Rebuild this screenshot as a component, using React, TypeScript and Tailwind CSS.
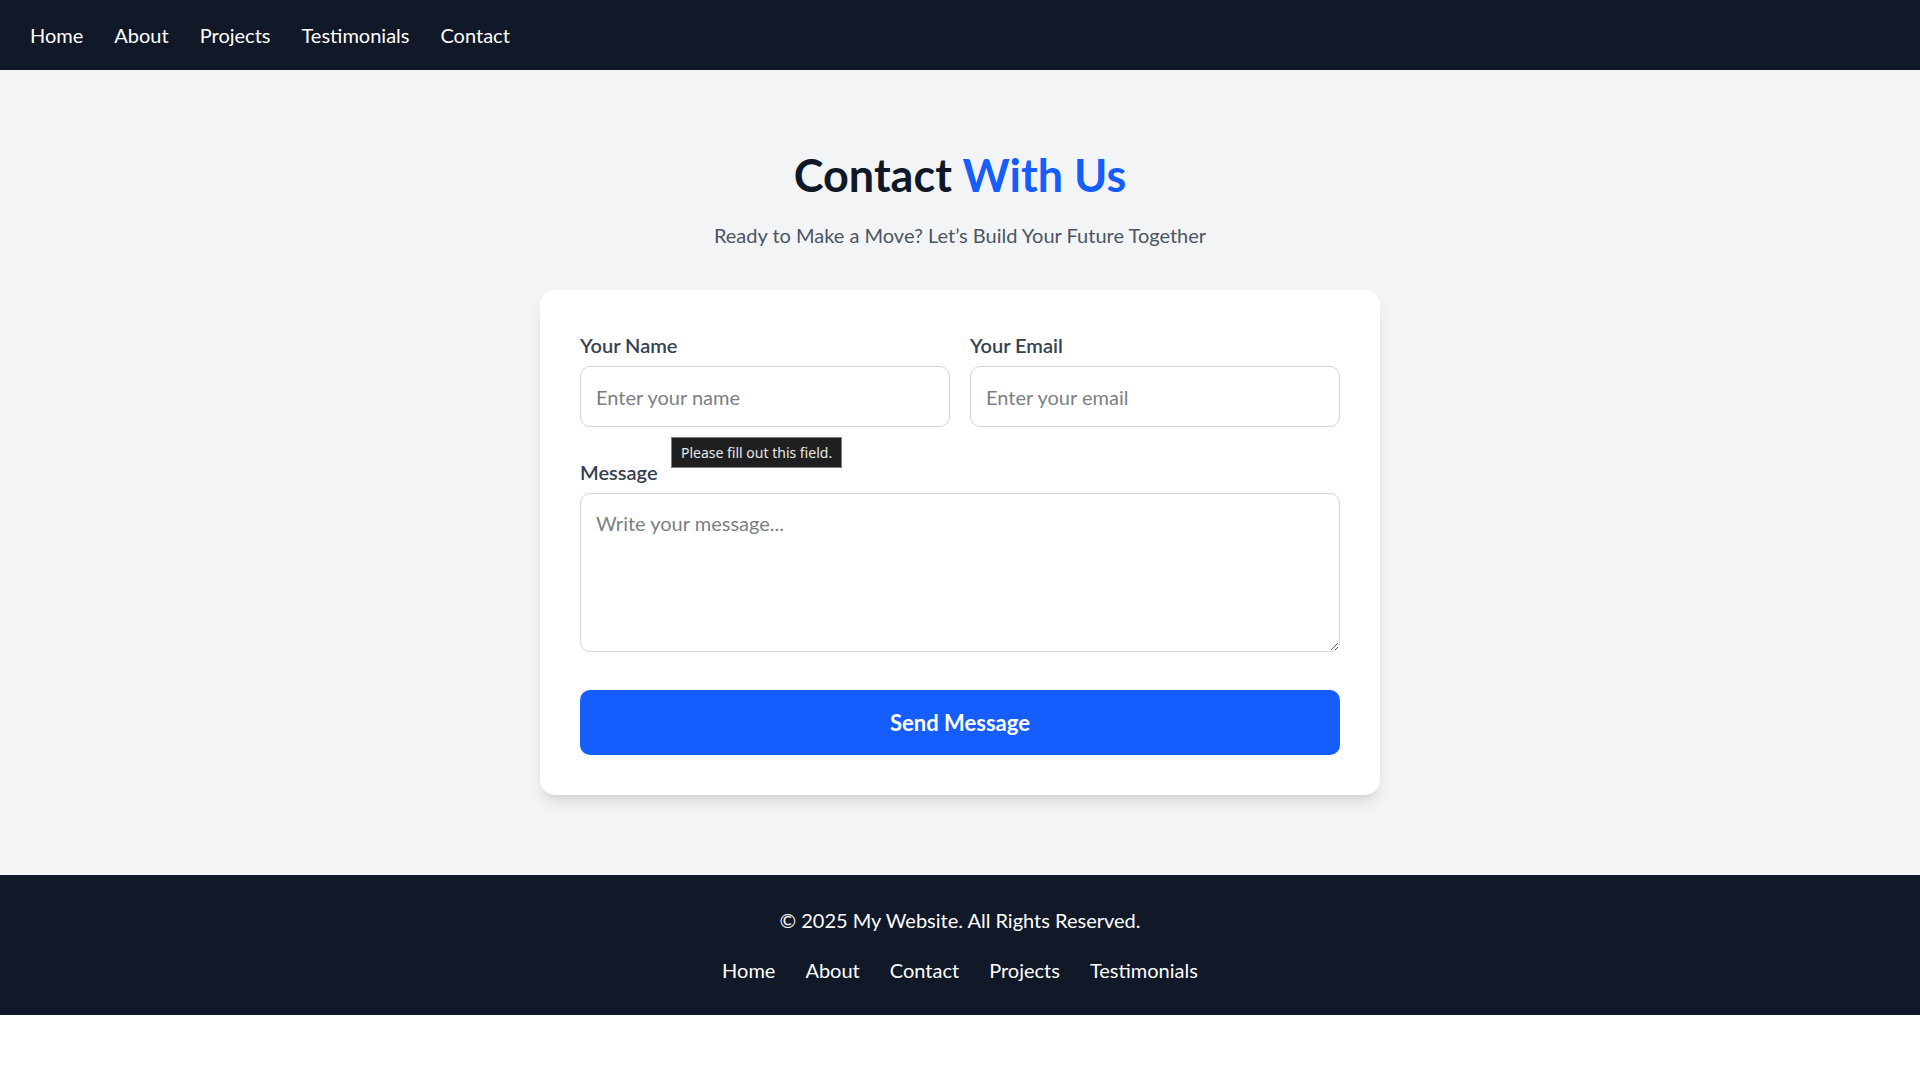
import React from 'react';

const navLinks = ['Home', 'About', 'Projects', 'Testimonials', 'Contact'];
const footerLinks = ['Home', 'About', 'Contact', 'Projects', 'Testimonials'];

export default function App() {
    return (
        <div className="min-h-screen bg-white font-['Lato','Open_Sans',sans-serif]">
            {/* Navbar */}
            <nav className="bg-[#111827] h-[70px] px-[30px] flex items-center">
                <ul className="flex items-center gap-[31px]">
                    {navLinks.map(l => (
                        <li key={l}>
                            <a href="#" className="text-white text-[20px] leading-[30px]">{l}</a>
                        </li>
                    ))}
                </ul>
            </nav>

            {/* Contact section */}
            <section className="bg-[#f3f4f6] py-[80px] flex flex-col items-center">
                <h2 className="text-[45px] leading-[50px] font-bold text-[#101828]">
                    Contact <span className="text-[#155dfc]">With Us</span>
                </h2>
                <p className="mt-[20px] text-[20px] leading-[30px] text-[#4a5565]">
                    Ready to Make a Move? Let’s Build Your Future Together
                </p>

                <form className="mt-[40px] w-[840px] bg-white rounded-[15px] shadow-lg p-[40px] flex flex-col" onSubmit={e => e.preventDefault()}>
                    <div className="grid grid-cols-2 gap-[20px]">
                        <div className="relative">
                            <label className="block text-[20px] leading-[30px] font-semibold text-[#364153] mb-[6px]">Your Name</label>
                            <input
                                placeholder="Enter your name"
                                className="block w-full h-[61px] px-[15px] border border-[#d1d5dc] rounded-[10px] text-[20px] text-[#101828] placeholder:text-[#7b7f86] outline-none"
                            />
                            {/* browser validation bubble */}
                            <div className="absolute left-[91px] top-[107px] z-10 h-[31px] px-[9px] flex items-center bg-[#1f1f1f] border border-[#808080] text-[#e8e8e8] text-[14px] font-['Noto_Sans',sans-serif] whitespace-nowrap">
                                Please fill out this field.
                            </div>
                        </div>
                        <div>
                            <label className="block text-[20px] leading-[30px] font-semibold text-[#364153] mb-[6px]">Your Email</label>
                            <input
                                type="email"
                                placeholder="Enter your email"
                                className="block w-full h-[61px] px-[15px] border border-[#d1d5dc] rounded-[10px] text-[20px] text-[#101828] placeholder:text-[#7b7f86] outline-none"
                            />
                        </div>
                    </div>

                    <div className="mt-[30px]">
                        <label className="block text-[20px] leading-[30px] font-semibold text-[#364153] mb-[6px]">Message</label>
                        <textarea
                            placeholder="Write your message..."
                            className="block w-full h-[159px] px-[15px] py-[14px] border border-[#d1d5dc] rounded-[10px] text-[20px] leading-[30px] text-[#101828] placeholder:text-[#7b7f86] outline-none resize-y"
                        />
                    </div>

                    <button
                        type="submit"
                        className="mt-[38px] h-[65px] w-full bg-[#155dfc] text-white rounded-[10px] text-[22px] font-bold"
                    >
                        Send Message
                    </button>
                </form>
            </section>

            {/* Footer */}
            <footer className="bg-[#111827] py-[30px] flex flex-col items-center">
                <p className="text-white text-[20px] leading-[30px]">© 2025 My Website. All Rights Reserved.</p>
                <div className="mt-[20px] flex items-center gap-[30px]">
                    {footerLinks.map(l => (
                        <a key={l} href="#" className="text-white text-[20px] leading-[30px]">{l}</a>
                    ))}
                </div>
            </footer>
        </div>
    );
}
